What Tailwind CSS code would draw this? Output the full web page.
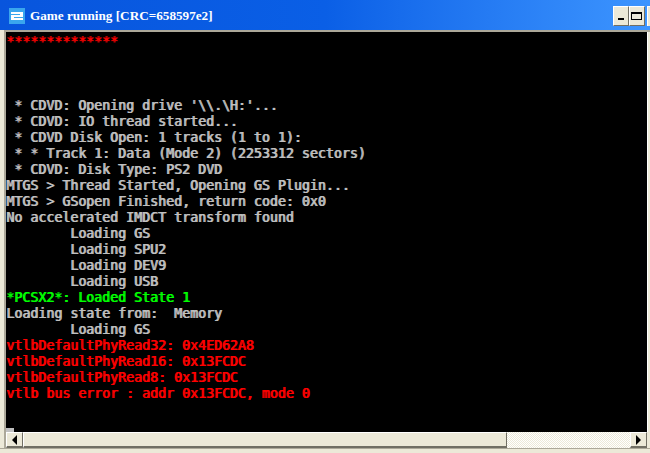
<!DOCTYPE html>
<html lang="en">
<head>
<meta charset="UTF-8" />
<title>Game running</title>
<script src="https://cdn.jsdelivr.net/npm/@tailwindcss/browser@4"></script>
</head>
<body class="bg-white">
<div class="w-[650px] h-[453px] overflow-hidden flex flex-col bg-[#ece9d8]">
  <!-- title bar -->
  <div class="h-[30px] shrink-0 flex items-center pl-[9px] pt-[2px] bg-gradient-to-r from-[#0855dd] via-[#0a5fe6] to-[#3d95ff]">
    <svg width="16" height="16" viewBox="0 0 16 16" class="shrink-0">
      <rect width="16" height="16" fill="#3aa6ee"/>
      <path d="M2 4h12v5H5v1h9v2H2V7h9V6H2z" fill="#fff"/>
    </svg>
    <span class="ml-[5px] text-white text-[13.2px] font-bold font-['Liberation_Serif',serif] leading-none">Game running [CRC=658597e2]</span>
    <div class="ml-auto flex">
      <div class="w-[16px] h-[20px] bg-[#ece9d8] border border-t-white border-l-white border-r-[#716f64] border-b-[#716f64] flex items-end justify-center pb-[5px]"><div class="w-[6px] h-[2px] bg-black"></div></div>
      <div class="w-[16px] h-[20px] bg-[#ece9d8] border border-t-white border-l-white border-r-[#716f64] border-b-[#716f64] pl-[1px] py-[5px]"><div class="w-[11px] h-full border border-black border-t-2"></div></div>
      <div class="w-[3px] h-[20px] ml-[2px] bg-[#ece9d8] border-l border-t border-white"></div>
    </div>
  </div>
  <!-- client -->
  <div class="flex-1 flex flex-col ml-[4px] border-t-2 border-l-2 border-[#aca899] min-h-0">
    <div class="flex-1 flex min-h-0">
      <pre class="relative flex-1 bg-black pt-[2px] text-[#c0c0c0] font-['DejaVu_Sans_Mono',monospace] text-[13.28px] leading-[16px] overflow-hidden [text-shadow:1px_0_0_currentColor]"><span class="text-[#ff0000]">**************</span>



 * CDVD: Opening drive '\\.\H:'...
 * CDVD: IO thread started...
 * CDVD Disk Open: 1 tracks (1 to 1):
 * * Track 1: Data (Mode 2) (2253312 sectors)
 * CDVD: Disk Type: PS2 DVD
MTGS &gt; Thread Started, Opening GS Plugin...
MTGS &gt; GSopen Finished, return code: 0x0
No accelerated IMDCT transform found
        Loading GS
        Loading SPU2
        Loading DEV9
        Loading USB
<span class="text-[#00ff00]">*PCSX2*: Loaded State 1</span>
Loading state from:  Memory
        Loading GS
<span class="text-[#ff0000]">vtlbDefaultPhyRead32: 0x4ED62A8
vtlbDefaultPhyRead16: 0x13FCDC
vtlbDefaultPhyRead8: 0x13FCDC
vtlb bus error : addr 0x13FCDC, mode 0</span><div class="absolute left-0 bottom-0 w-[8px] h-[4px] bg-[#c0c0c0]"></div></pre>
      <div class="w-[3px] shrink-0 bg-[#ece9d8] border-l border-white"></div>
    </div>
    <!-- scrollbar -->
    <div class="h-[16px] shrink-0 flex bg-[conic-gradient(#fff_25%,#ece9d8_0_50%,#fff_0_75%,#ece9d8_0)] bg-[length:2px_2px]">
      <div class="w-[17px] bg-[#ece9d8] border border-t-white border-l-white border-r-[#716f64] border-b-2 border-b-[#716f64] flex items-center justify-center"><div class="w-0 h-0 border-y-[5px] border-y-transparent border-r-[5px] border-r-black"></div></div>
      <div class="w-[484px] bg-[#ece9d8] border border-t-white border-l-white border-r-[#716f64] border-b-2 border-b-[#716f64]"></div>
      <div class="flex-1"></div>
      <div class="w-[17px] bg-[#ece9d8] border border-t-white border-l-white border-r-[#716f64] border-b-2 border-b-[#716f64] flex items-center justify-center"><div class="w-0 h-0 border-y-[5px] border-y-transparent border-l-[5px] border-l-black"></div></div>
      <div class="w-[3px] bg-[#ece9d8]"></div>
    </div>
  </div>
  <div class="h-[5px] shrink-0 border-t border-[#aca899]"></div>
</div>
</body>
</html>
